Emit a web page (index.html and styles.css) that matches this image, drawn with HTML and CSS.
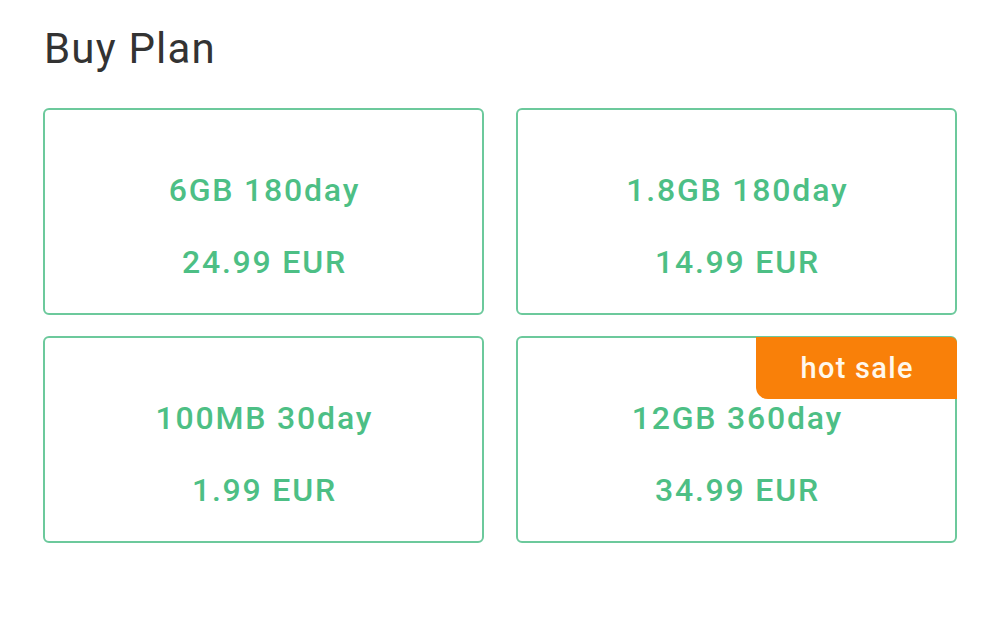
FILE: index.html
```html
<!DOCTYPE html>
<html lang="en">
<head>
<meta charset="utf-8">
<title>Buy Plan</title>
<link rel="stylesheet" href="styles.css">
</head>
<body>
  <main class="page">
    <h1 class="title">Buy Plan</h1>
    <section class="plans">
      <div class="plan">
        <div class="plan-name">6GB 180day</div>
        <div class="plan-price">24.99 EUR</div>
      </div>
      <div class="plan">
        <div class="plan-name">1.8GB 180day</div>
        <div class="plan-price">14.99 EUR</div>
      </div>
      <div class="plan">
        <div class="plan-name">100MB 30day</div>
        <div class="plan-price">1.99 EUR</div>
      </div>
      <div class="plan">
        <span class="badge">hot sale</span>
        <div class="plan-name">12GB 360day</div>
        <div class="plan-price">34.99 EUR</div>
      </div>
    </section>
  </main>
</body>
</html>
```
FILE: styles.css
```css
* {
  box-sizing: border-box;
}

html, body {
  margin: 0;
  background: #ffffff;
}

body {
  font-family: Roboto, "Noto Sans", "Liberation Sans", sans-serif;
}

.page {
  padding: 24px 43px 0 43px;
}

.title {
  margin: 0 0 34px 1px;
  font-size: 42px;
  line-height: 50px;
  font-weight: 400;
  letter-spacing: 1.2px;
  color: #333333;
}

.plans {
  display: grid;
  grid-template-columns: 441px 441px;
  column-gap: 32px;
  row-gap: 21px;
}

.plan {
  position: relative;
  height: 207px;
  padding-top: 44px;
  border: 2px solid #6cc99c;
  border-radius: 6px;
  text-align: center;
  color: #4dbf85;
  font-size: 32px;
  font-weight: 500;
  line-height: 72px;
  letter-spacing: 1.8px;
  text-indent: 1.8px;
}

.badge {
  position: absolute;
  top: -1px;
  right: -2px;
  width: 201px;
  height: 62px;
  background: #f98009;
  color: #fff8ec;
  border-radius: 0 6px 0 12px;
  font-size: 29px;
  font-weight: 500;
  line-height: 62px;
  letter-spacing: 1.3px;
  text-indent: 1.3px;
  text-align: center;
}
```
